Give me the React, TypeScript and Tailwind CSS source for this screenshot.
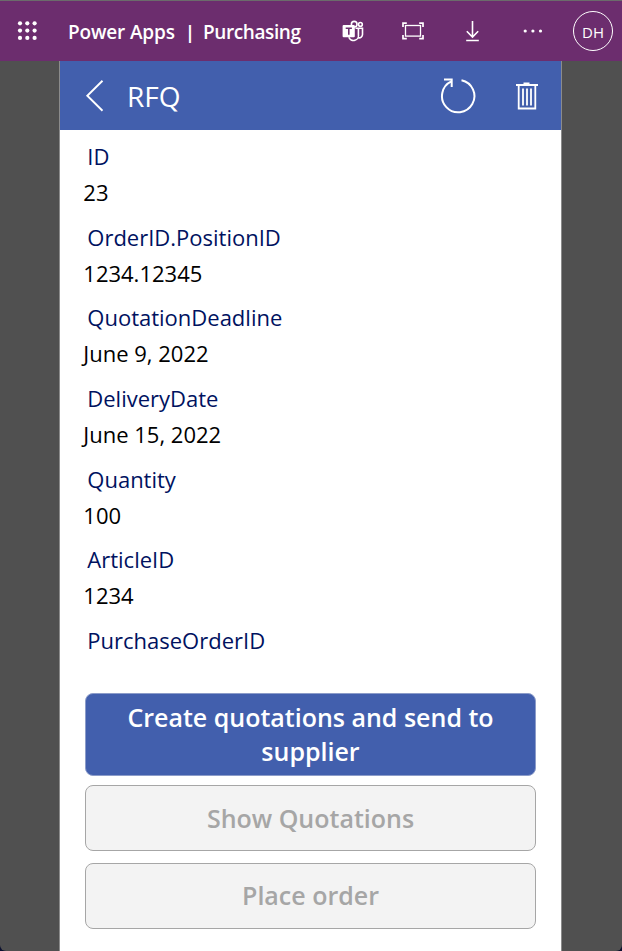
import React from "react";

const fields = [
  { label: "ID", value: "23" },
  { label: "OrderID.PositionID", value: "1234.12345" },
  { label: "QuotationDeadline", value: "June 9, 2022" },
  { label: "DeliveryDate", value: "June 15, 2022" },
  { label: "Quantity", value: "100" },
  { label: "ArticleID", value: "1234" },
  { label: "PurchaseOrderID", value: "" },
];

function Waffle() {
  const p = [20, 27.3, 34.6];
  return (
    <svg className="h-[60px] w-[68px] shrink-0" viewBox="0 1 68 60" fill="#fff">
      {p.map((x) => p.map((y) => <circle key={`${x}-${y}`} cx={x} cy={y + 3.3} r="2.1" />))}
    </svg>
  );
}

function Teams() {
  return (
    <svg className="h-[22px] w-[22px]" viewBox="0 0 22 22" fill="none" stroke="#fff" strokeWidth="1.6">
      <circle cx="12.2" cy="4.2" r="2.8" />
      <circle cx="18.4" cy="4.4" r="1.9" />
      <path d="M13.500 8.300h7v6.200a3.400 3.400 0 0 1-4 3.300M16.400 8.300v6.200a5 5 0 0 1-9.600 2.700" />
      <rect x="0.6" y="5" width="12.2" height="12.2" rx="1" fill="#fff" stroke="none" />
      <path d="M3.700 8.200h6.200M6.800 8.200v6.600" stroke="#6c2d6e" strokeWidth="1.6" />
    </svg>
  );
}

export default function App() {
  return (
    <div className="h-[951px] w-[622px] bg-[#0b1030]">
      <div className="flex h-full w-full flex-col overflow-hidden rounded-b-[6px] bg-[#505050] font-['Open_Sans',sans-serif]">
        <header className="flex h-[61px] shrink-0 items-center border-t border-[#6b6b6b] bg-[#6c2d6e] text-white">
          <Waffle />
          <div className="flex w-[274px] items-center pt-[2px] text-[19px] font-semibold leading-[60px]">
            <span className="w-[119px] whitespace-nowrap font-[650] tracking-[-0.15px]">Power Apps</span>
            <span className="w-[16px] text-[18px] font-bold">
              <span className="-ml-[2px]">|</span>
            </span>
            <span className="whitespace-nowrap font-[650] tracking-[-0.4px]">Purchasing</span>
          </div>
          <Teams />
          <svg className="ml-[38px] h-[18px] w-[22px]" viewBox="0 0 22 18" fill="none" stroke="#fff" strokeWidth="1.3">
            <rect x="3.5" y="3.5" width="15" height="10.6" />
            <path d="M1 5V1.200H4.800M17.200 1.200H21V5M21 12.900v3.800H17.200M4.800 16.700H1V12.900" strokeWidth="1.7" />
          </svg>
          <svg className="ml-[42px] h-[22px] w-[14px]" viewBox="0 0 14 22" fill="none" stroke="#fff" strokeWidth="1.6">
            <path d="M6.500 1v16M.8 11.200l5.700 5.800 5.700-5.800M.2 20.500h12.600" />
          </svg>
          <svg className="ml-[43px] h-[6px] w-[20px]" viewBox="0 0 20 6" fill="#fff">
            <circle cx="2.2" cy="3" r="1.6" />
            <circle cx="9.9" cy="3" r="1.6" />
            <circle cx="17.5" cy="3" r="1.6" />
          </svg>
          <div className="ml-[30px] flex h-10 w-10 items-center justify-center rounded-full border border-white pt-[2px] text-[15px]">
            DH
          </div>
        </header>
        <main className="ml-[59px] flex w-[503px] flex-1 flex-col border-x border-[#8b8b8b] bg-white">
          <div className="flex h-[69px] shrink-0 items-center bg-[#425fad] text-white">
            <svg className="ml-[25px] h-[34px] w-[20px]" viewBox="0 0 20 34" fill="none" stroke="#fff" strokeWidth="1.9">
              <path d="M17.500 1.700L2.300 16.700l15.200 15" />
            </svg>
            <h1 className="ml-[22px] w-[312px] pt-[2px] text-[28px] leading-[67px]">RFQ</h1>
            <svg className="h-[38px] w-[38px]" viewBox="0 0 38 38" fill="none" stroke="#fff" strokeWidth="2">
              <path d="M22.500 3.200A16.200 16.200 0 1 1 12.300 4.400M5 2.600h7.700v7.500" />
            </svg>
            <svg className="ml-[38px] h-[30px] w-[24px]" viewBox="0 0 24 30" fill="none" stroke="#fff" strokeWidth="1.8">
              <path d="M1 4h22M8.500 2.300h6M3.700 4v23.500h16.600V4M8 7.500v17M12 7.500v17M16 7.500v17" />
            </svg>
          </div>
          <dl className="h-[563px] shrink-0 pt-[8.02px] text-[22px] leading-9">
            {fields.map((f) => (
              <div key={f.label} className="h-[80.7px] whitespace-nowrap">
                <dt className="pl-[27.3px] text-[#00125f]">{f.label}</dt>
                <dd className="pl-[23.3px] text-black">{f.value}</dd>
              </div>
            ))}
          </dl>
          <div className="ml-[25px] flex w-[451px] flex-col text-center text-[25px] font-semibold leading-[34px]">
            <button className="h-[83px] rounded-[8px] border border-[#8c9cc9] bg-[#425fad] px-8 pb-[2px] text-white">
              Create quotations and send to supplier
            </button>
            <button className="mt-[9px] h-[66px] rounded-[8px] border border-[#a6a6a6] bg-[#f3f3f3] text-[#a6a6a6]">
              Show Quotations
            </button>
            <button className="mt-[12px] h-[66px] rounded-[8px] border border-[#a6a6a6] bg-[#f3f3f3] pb-[2px] text-[#a6a6a6]">
              Place order
            </button>
          </div>
        </main>
      </div>
    </div>
  );
}
